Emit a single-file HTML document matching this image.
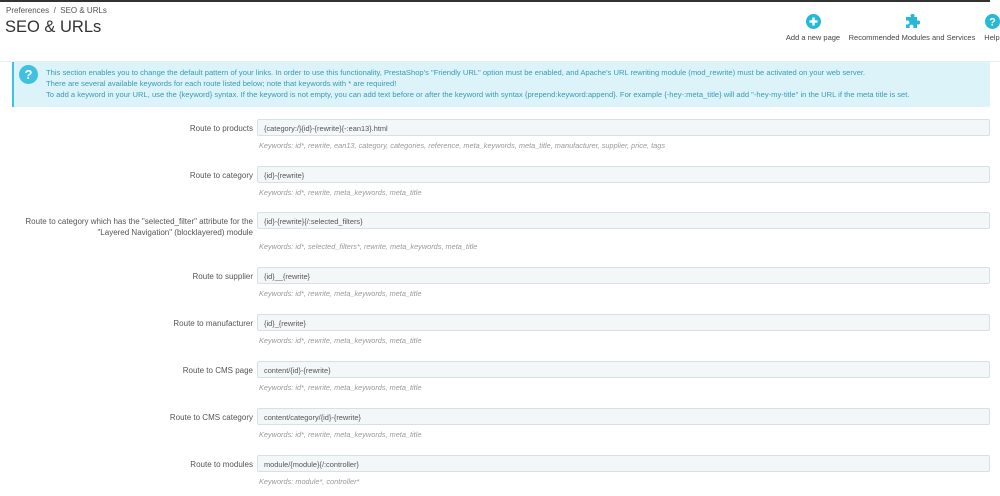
<!DOCTYPE html>
<html><head><style>
body{margin:0;width:1000px;height:496px;overflow:hidden;background:#fff;font-family:"Liberation Sans",sans-serif;color:#555;position:relative}
.top{position:absolute;left:0;top:0;width:990px;height:2px;background:#333}
.bc{position:absolute;left:6px;top:6px;font-size:8px;color:#555}
h1{position:absolute;left:5px;top:18px;margin:0;font-size:16.5px;font-weight:normal;color:#333}
.hdr{position:absolute;left:0;top:61px;width:1000px;border-top:1px solid #e8eef0}
.tb{position:absolute;top:14px;text-align:center;font-size:7.5px;color:#444}
.tb svg{display:block;margin:0 auto 4px}
.info{position:absolute;left:12px;top:62px;width:976px;height:45px;background:#dcf3f9;border-left:2px solid #3fc1df;color:#3a9ab5;font-size:7.6px;line-height:10.8px}
.info .t{position:absolute;left:32px;top:6px;white-space:nowrap}
.ic{position:absolute;left:5px;top:3px}
.lab{position:absolute;right:747px;font-size:8px;color:#555;text-align:right;line-height:11px}
.in{position:absolute;left:257px;width:733px;height:17px;background:#f4f7f8;border:1px solid #d6e1e4;border-radius:2px;font-size:7.4px;color:#555;line-height:17px;padding-left:6px;box-sizing:border-box}
.hl{position:absolute;left:259px;font-size:7.35px;font-style:italic;color:#999}
</style></head><body>
<div class="top"></div>
<div class="bc">Preferences &nbsp;/&nbsp; SEO &amp; URLs</div>
<h1>SEO &amp; URLs</h1>
<div class="tb" style="left:782px;width:62px"><svg width="15" height="15"><circle cx="7.5" cy="7.5" r="7.5" fill="#25b9d7"/><path d="M7.5 3.5v8M3.5 7.5h8" stroke="#fff" stroke-width="2.4"/></svg>Add a new page</div>
<div class="tb" style="left:846px;width:132px"><svg width="16" height="15"><path d="M4 3h3a2 2 0 1 1 3 0h3v4a2 2 0 1 1 0 3v4H9a2 2 0 1 0-3 0H2v-4a2 2 0 1 0 0-3V3z" fill="#25b9d7"/></svg>Recommended Modules and Services</div>
<div class="tb" style="left:982px;width:20px"><svg width="15" height="15"><circle cx="7.5" cy="7.5" r="7.5" fill="#25b9d7"/><text x="7.5" y="11.5" text-anchor="middle" font-size="11" font-weight="bold" fill="#fff" font-family="Liberation Sans">?</text></svg>Help</div>
<div class="hdr"></div>
<div class="info"><svg class="ic" width="19" height="19"><circle cx="9.5" cy="9.5" r="9.5" fill="#3fc1df"/><text x="9.5" y="14" text-anchor="middle" font-size="13" font-weight="bold" fill="#fff" font-family="Liberation Sans">?</text></svg>
<div class="t">This section enables you to change the default pattern of your links. In order to use this functionality, PrestaShop's "Friendly URL" option must be enabled, and Apache's URL rewriting module (mod_rewrite) must be activated on your web server.<br>There are several available keywords for each route listed below; note that keywords with * are required!<br>To add a keyword in your URL, use the {keyword} syntax. If the keyword is not empty, you can add text before or after the keyword with syntax {prepend:keyword:append}. For example {-hey-:meta_title} will add "-hey-my-title" in the URL if the meta title is set.</div></div>

<div class="lab" style="top:123px">Route to products</div>
<div class="in" style="top:119px">{category:/}{id}-{rewrite}{-:ean13}.html</div>
<div class="hl" style="top:141px">Keywords: id*, rewrite, ean13, category, categories, reference, meta_keywords, meta_title, manufacturer, supplier, price, tags</div>

<div class="lab" style="top:170px">Route to category</div>
<div class="in" style="top:166px">{id}-{rewrite}</div>
<div class="hl" style="top:188px">Keywords: id*, rewrite, meta_keywords, meta_title</div>

<div class="lab" style="top:216px">Route to category which has the "selected_filter" attribute for the<br>"Layered Navigation" (blocklayered) module</div>
<div class="in" style="top:212px">{id}-{rewrite}{/:selected_filters}</div>
<div class="hl" style="top:242px">Keywords: id*, selected_filters*, rewrite, meta_keywords, meta_title</div>

<div class="lab" style="top:271px">Route to supplier</div>
<div class="in" style="top:267px">{id}__{rewrite}</div>
<div class="hl" style="top:289px">Keywords: id*, rewrite, meta_keywords, meta_title</div>

<div class="lab" style="top:318px">Route to manufacturer</div>
<div class="in" style="top:314px">{id}_{rewrite}</div>
<div class="hl" style="top:336px">Keywords: id*, rewrite, meta_keywords, meta_title</div>

<div class="lab" style="top:365px">Route to CMS page</div>
<div class="in" style="top:361px">content/{id}-{rewrite}</div>
<div class="hl" style="top:383px">Keywords: id*, rewrite, meta_keywords, meta_title</div>

<div class="lab" style="top:412px">Route to CMS category</div>
<div class="in" style="top:408px">content/category/{id}-{rewrite}</div>
<div class="hl" style="top:430px">Keywords: id*, rewrite, meta_keywords, meta_title</div>

<div class="lab" style="top:459px">Route to modules</div>
<div class="in" style="top:455px">module/{module}{/:controller}</div>
<div class="hl" style="top:477px">Keywords: module*, controller*</div>
</body></html>
